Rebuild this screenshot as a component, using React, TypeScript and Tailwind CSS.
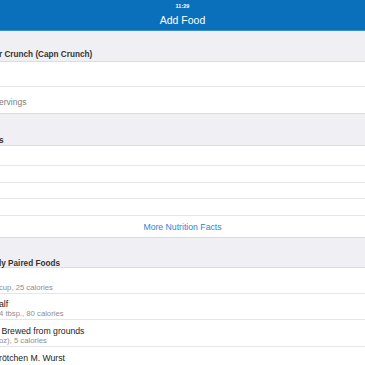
import React from 'react'

const font = { fontFamily: '"Liberation Sans", Arial, sans-serif' }

function SectionHeader({ title, className, lead }: { title: string; className: string; lead: string }) {
  return (
    <div className={`flex items-end bg-[#efeff4] border-b border-[#dcdce0] ${className}`}>
      <span className={`-ml-[1px] text-[8.2px] font-bold text-[#333] ${lead}`}>{title}</span>
    </div>
  )
}

function FoodRow({ title, sub, h }: { title: string; sub: string; h: string }) {
  return (
    <div className={`flex flex-col justify-center pt-[5px] bg-white border-b border-[#e6e6e9] ${h}`}>
      <span className="-ml-[1px] h-[10px] text-[8.7px] text-[#222] leading-[10px] whitespace-pre">{title}</span>
      <span className="-ml-[1px] text-[7.7px] text-[#8e8e93] leading-[10px] whitespace-pre">{sub}</span>
    </div>
  )
}

export default function App() {
  const paired = [
    { title: '', sub: 'cup, 25 calories', h: 'h-[26px]' },
    { title: 'alf', sub: '4 tbsp., 80 calories', h: 'h-[26px]' },
    { title: ' Brewed from grounds', sub: 'oz), 5 calories', h: 'h-[27px]' },
    { title: 'rötchen M. Wurst', sub: '7 Brötchen, 220 calories', h: 'h-[27px]' },
  ]

  return (
    <div className="w-[365px] h-[365px] overflow-hidden bg-[#efeff4]" style={font}>
      {/* Nav bar */}
      <div className="h-[31px] bg-[#0a70bb] border-b border-[#3d8fcc] flex flex-col items-center text-white">
        <span className="mt-[4px] text-[5.5px] font-bold leading-none">11:29</span>
        <span className="mt-[5px] text-[10.5px] leading-none">Add Food</span>
      </div>

      <SectionHeader title="r Crunch (Capn Crunch)" className="h-[31px] pb-[2px]" lead="leading-none" />

      <div className="h-[25px] bg-white border-b border-[#e6e6e9]" />
      <div className="h-[27px] bg-white flex items-center pt-[4px] border-b border-[#dcdce0]">
        <span className="-ml-[1px] text-[8.5px] text-[#7d7d82]">ervings</span>
      </div>

      <SectionHeader title="s" className="h-[32px] pb-0" lead="leading-none" />

      <div className="h-[20px] bg-white border-b border-[#e6e6e9]" />
      <div className="h-[17px] bg-white border-b border-[#e6e6e9]" />
      <div className="h-[16px] bg-white border-b border-[#e6e6e9]" />
      <div className="h-[17px] bg-white border-b border-[#e6e6e9]" />
      <div className="h-[22px] bg-white flex items-center justify-center pt-[3px] border-b border-[#dcdce0]">
        <span className="text-[8.7px] text-[#2c87cf]">More Nutrition Facts</span>
      </div>

      <SectionHeader title="ly Paired Foods" className="h-[30px] pb-0" lead="leading-[6px]" />

      {paired.map((p, i) => (
        <FoodRow key={i} title={p.title} sub={p.sub} h={p.h} />
      ))}
    </div>
  )
}
